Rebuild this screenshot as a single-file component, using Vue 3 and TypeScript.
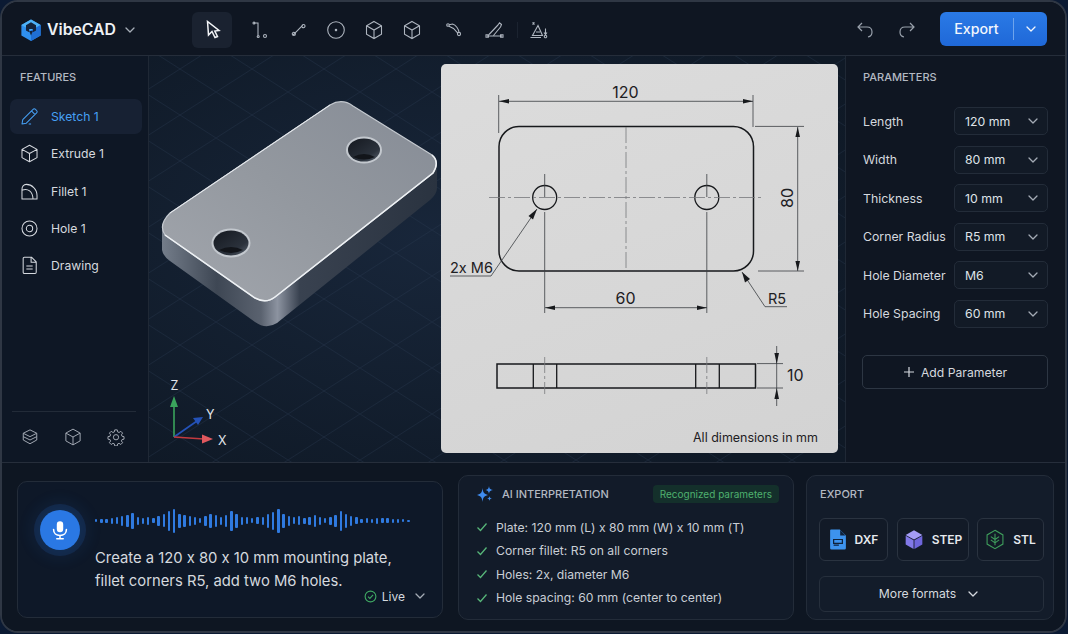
<script setup lang="ts">
// toolbar icons are 20x20, single path each
const tools = [
  { d: 'M5.5 1.5 L6.5 15 L10 11.5 L13 17.5 L15.5 16.5 L12.8 11 L17 10.5 Z', active: true },
  { d: 'M4 3 H8 V15.5 M5 3 a1 1 0 1 1 -2 0 a1 1 0 1 1 2 0 M9.2 16.5 a1 1 0 1 1 -2 0 a1 1 0 1 1 2 0 M16.5 16 a1.5 1.5 0 1 1 -3 0 a1.5 1.5 0 1 1 3 0' },
  { d: 'M5.2 14.8 L14.8 5.2 M5.9 15.5 a1.6 1.6 0 1 1 -0.1 -3.2 a1.6 1.6 0 1 1 0.1 3.2 M15.5 7.7 a1.6 1.6 0 1 1 -0.1 -3.2 a1.6 1.6 0 1 1 0.1 3.2' },
  { d: 'M18.3 10 a8.3 8.3 0 1 1 -16.6 0 a8.3 8.3 0 1 1 16.6 0 M10.7 10 a0.7 0.7 0 1 1 -1.4 0 a0.7 0.7 0 1 1 1.4 0' },
  { d: 'M10 1.5 L17.5 5.7 V14.3 L10 18.5 L2.5 14.3 V5.7 Z M2.5 5.7 L10 10 L17.5 5.7 M10 10 V18.5' },
  { d: 'M10 1.5 L17.5 5.7 V14.3 L10 18.5 L2.5 14.3 V5.7 Z M2.5 5.7 L10 10 L17.5 5.7 M10 10 V18.5' },
  { d: 'M5.3 4.8 L8.5 4 C12 5 14.5 9 15 12.4 M5 6.2 L9.5 8.5 L13.8 13.2 M5.3 5 a1.3 1.3 0 1 1 -2.6 0 a1.3 1.3 0 1 1 2.6 0 M16.6 14 a1.6 1.6 0 1 1 -3.2 0 a1.6 1.6 0 1 1 3.2 0' },
  { d: 'M3 16 H18 M5 14.5 L14 5 M9.5 15.5 L16.5 7 M14 5 L15.5 2.8 L17.5 4.5 L16.5 7 M2 14.8 h2.4 v2.4 h-2.4 z M16.6 14.8 h2.4 v2.4 h-2.4 z' },
  { d: 'M9 5.5 L3.5 15.5 H13.5 Z M7 12 H11 M3.5 2.5 l2 2 M5.5 2.5 l-2 2 M1.5 17.5 H12 M16.5 8.5 V14 M15 12.5 L16.5 14.5 L18 12.5 M17.7 16.5 a1.2 1.2 0 1 1 -2.4 0 a1.2 1.2 0 1 1 2.4 0' },
]

const features = [
  { name: 'Sketch 1', active: true, d: 'M2.5 21.5 L3.5 16 L16.5 3 a2 2 0 0 1 3 0 L21 4.5 a2 2 0 0 1 0 3 L8 20.5 Z M14.5 5 L19 9.5 M11 21.5 H14' },
  { name: 'Extrude 1', d: 'M12 1.5 L21.5 6.8 V17.2 L12 22.5 L2.5 17.2 V6.8 Z M2.5 6.8 L12 12 L21.5 6.8 M12 12 V22.5' },
  { name: 'Fillet 1', d: 'M2.5 21.5 H21.5 V17 C21.5 9 15 3 8 3 C4.5 3 2.5 6 2.5 9 Z M2.5 10.5 C10 7.5 16 12 16.5 21.5' },
  { name: 'Hole 1', d: 'M21.5 12 a9.5 9.5 0 1 1 -19 0 a9.5 9.5 0 1 1 19 0 M16 12 a4 4 0 1 1 -8 0 a4 4 0 1 1 8 0' },
  { name: 'Drawing', d: 'M5.5 1.5 H14.5 L20.5 7.5 V20.5 a1.5 1.5 0 0 1 -1.5 1.5 H5.5 A1.5 1.5 0 0 1 4 20.5 V3 A1.5 1.5 0 0 1 5.5 1.5 Z M14 2 V8 H20.5 M8 12.5 H16 M8 16.5 H16' },
]

const sideIcons = [
  'M12 2.5 L21 7 L12 11.5 L3 7 Z M3 11.5 L12 16 L21 11.5 M3 16 L12 21 L21 16 M3 7 V16 M21 7 V16',
  'M12 1.5 L21.5 6.8 V17.2 L12 22.5 L2.5 17.2 V6.8 Z M2.5 6.8 L12 12 L21.5 6.8 M12 12 V22.5',
  'M10.3 2.5 h3.4 l.5 2.7 1.9.8 2.3-1.6 2.4 2.4-1.6 2.3.8 1.9 2.7.5 v3.4 l-2.7.5 -.8 1.9 1.6 2.3 -2.4 2.4 -2.3-1.6 -1.9.8 -.5 2.7 h-3.4 l-.5-2.7 -1.9-.8 -2.3 1.6 -2.4-2.4 1.6-2.3 -.8-1.9 -2.7-.5 v-3.4 l2.7-.5 .8-1.9 -1.6-2.3 2.4-2.4 2.3 1.6 1.9-.8 Z M15.5 12.3 a3.5 3.5 0 1 1 -7 0 a3.5 3.5 0 1 1 7 0',
]

const params = [
  { label: 'Length', value: '120 mm' },
  { label: 'Width', value: '80 mm' },
  { label: 'Thickness', value: '10 mm' },
  { label: 'Corner Radius', value: 'R5 mm' },
  { label: 'Hole Diameter', value: 'M6' },
  { label: 'Hole Spacing', value: '60 mm' },
]

const recognized = [
  'Plate: 120 mm (L) x 80 mm (W) x 10 mm (T)',
  'Corner fillet: R5 on all corners',
  'Holes: 2x, diameter M6',
  'Hole spacing: 60 mm (center to center)',
]

// waveform bar heights, left to right
const wave = [3, 4, 4, 6, 7, 10, 12, 16, 8, 6, 8, 5, 10, 13, 20, 24, 14, 12, 10, 8, 5, 10, 14, 12, 8, 12, 20, 14, 8, 7, 5, 7, 8, 14, 18, 24, 14, 10, 7, 9, 6, 8, 12, 8, 5, 8, 12, 20, 14, 10, 7, 4, 5, 4, 6, 5, 5, 4, 4, 3, 2]
</script>

<template>
  <div class="frame">
    <header class="topbar">
      <div class="brand">
        <svg viewBox="0 0 24 24" width="22" height="24">
          <path d="M12 0.5 L22.5 6.5 V18 L12 24 L1.5 18 V6.5 Z" fill="#2f8fee" />
          <path d="M12 0.5 L22.5 6.5 L12 12.5 L1.5 6.5 Z" fill="#4db1f7" />
          <path d="M12 12.5 V24 L22.5 18 V6.5 Z" fill="#1f6fd6" />
          <path d="M12 3.5 L17.5 6.7 V12.5 L14 14.5 V11 H10 V14.5 L6.5 12.5 V6.7 Z" fill="#14233c" />
          <path d="M10 13 H14 L12 18 Z" fill="#14233c" />
        </svg>
        <span class="brand-name">VibeCAD</span>
        <svg class="chev" viewBox="0 0 12 12" width="12" height="12"><path d="M2 4 L6 8 L10 4" /></svg>
      </div>
      <nav class="tools">
        <button v-for="(t, i) in tools" :key="i" class="tool" :class="{ on: t.active }">
          <svg class="ln" viewBox="0 0 20 20" width="20" height="20"><path :d="t.d" /></svg>
        </button>
      </nav>
      <div class="history">
        <svg class="ln" viewBox="0 0 20 20" width="20" height="20"><path d="M7 3 L3 7 L7 11 M3 7 H12 C15 7 17 9 17 12 C17 14.5 15.5 16.5 13 17" /></svg>
        <svg class="ln" viewBox="0 0 20 20" width="20" height="20"><path d="M13 3 L17 7 L13 11 M17 7 H8 C5 7 3 9 3 12 C3 14.5 4.5 16.5 7 17" /></svg>
      </div>
      <button class="export-btn">
        <span class="export-text">Export</span>
        <span class="export-caret">
          <svg class="chev" viewBox="0 0 12 12" width="12" height="12"><path d="M2 4 L6 8 L10 4" /></svg>
        </span>
      </button>
    </header>

    <div class="workspace">
      <aside class="features">
        <h3 class="label">FEATURES</h3>
        <ul class="feature-list">
          <li v-for="f in features" :key="f.name" class="feature" :class="{ on: f.active }">
            <svg class="ln" viewBox="0 0 24 24" width="19" height="19"><path :d="f.d" /></svg>
            <span>{{ f.name }}</span>
          </li>
        </ul>
        <div class="side-foot">
          <svg v-for="(d, i) in sideIcons" :key="i" class="ln" viewBox="0 0 24 24" width="18" height="18"><path :d="d" /></svg>
        </div>
      </aside>

      <main class="viewport">
        <svg class="scene" viewBox="149 56 696 406" width="696" height="406">
          <defs>
            <pattern id="iso" width="72" height="46" patternUnits="userSpaceOnUse">
              <path d="M0 0 L72 46 M72 0 L0 46" stroke="#2a3b52" stroke-width="0.6" fill="none" />
            </pattern>
            <radialGradient id="glow" cx="0.4" cy="0.45" r="0.7">
              <stop offset="0" stop-color="#18263a" />
              <stop offset="1" stop-color="#0f1926" />
            </radialGradient>
            <linearGradient id="face" x1="0" y1="1" x2="1" y2="0">
              <stop offset="0" stop-color="#a2a6ad" />
              <stop offset="0.5" stop-color="#93989f" />
              <stop offset="1" stop-color="#868c96" />
            </linearGradient>
            <linearGradient id="side" x1="0" y1="0" x2="1" y2="0">
              <stop offset="0" stop-color="#747d8a" />
              <stop offset="0.2" stop-color="#3e4754" />
              <stop offset="0.36" stop-color="#5a626f" />
              <stop offset="0.42" stop-color="#8c93a0" />
              <stop offset="0.5" stop-color="#394250" />
              <stop offset="1" stop-color="#2a3340" />
            </linearGradient>
            <linearGradient id="bore" x1="0" y1="0" x2="1" y2="1">
              <stop offset="0" stop-color="#14181f" />
              <stop offset="0.7" stop-color="#2b323c" />
              <stop offset="1" stop-color="#5b6470" />
            </linearGradient>
          </defs>
          <rect x="149" y="56" width="696" height="406" fill="url(#glow)" />
          <rect x="149" y="56" width="696" height="406" fill="url(#iso)" opacity="0.6" />

          <!-- plate -->
          <path d="M162 225 V250 Q163 256 170 261 L255 322 Q266 330 277 323 L430 200 Q437 194 437 188 V165 Z" fill="url(#side)" />
          <path d="M170 213 L330 105 Q342 98 353 106 L432 155 Q440 162 433 173 L275 297 Q266 304 255 298 L165 235 Q158 225 170 213 Z" fill="url(#face)" stroke="#c4c9cf" stroke-width="1.2" />
          <path d="M165 235 L255 298 Q266 304 275 297 L433 173 Q440 162 432 155" fill="none" stroke="#eef1f4" stroke-width="1.5" />
          <path d="M170 213 L330 105" fill="none" stroke="#e5e8ec" stroke-width="1" />

          <g>
            <ellipse cx="364" cy="150" rx="18" ry="13.5" fill="#c3c8ce" />
            <ellipse cx="364" cy="150" rx="16" ry="11.5" fill="url(#bore)" />
            <path d="M353 157 Q364 151 375 157 Q364 162 353 157 Z" fill="#12151a" />
          </g>
          <g>
            <ellipse cx="231" cy="243" rx="19.5" ry="14.5" fill="#c3c8ce" />
            <ellipse cx="231" cy="243" rx="17.5" ry="12.5" fill="url(#bore)" />
            <path d="M219 250 Q231 244 243 250 Q231 256 219 250 Z" fill="#12151a" />
          </g>

          <!-- axis gizmo -->
          <path d="M174 437 V404" stroke="#3aa45c" stroke-width="1.6" />
          <path d="M174 396 L178 407 H170 Z" fill="#3aa45c" />
          <path d="M174 437 L197 421" stroke="#2452b8" stroke-width="1.6" />
          <path d="M203 417 L198 425 L193 418 Z" fill="#2452b8" />
          <path d="M174 437 L204 439" stroke="#c33a3f" stroke-width="1.6" />
          <path d="M213 439 L202 443.5 V434.5 Z" fill="#e0585e" />
          <text x="170.5" y="390" class="axis">Z</text>
          <text x="206" y="419" class="axis">Y</text>
          <text x="218" y="445" class="axis">X</text>
        </svg>

        <section class="sheet">
          <svg viewBox="441 64 397 389" width="397" height="389">
            <!-- top view -->
            <rect x="499" y="126.5" width="254.5" height="144.5" rx="20" class="thick" />
            <circle cx="544.7" cy="197.5" r="12" class="med" />
            <circle cx="706.8" cy="197.5" r="12" class="med" />
            <path d="M626 127 V271" class="center" />
            <path d="M489 197.5 H762" class="center" />
            <path d="M544.7 174 V197 M706.8 174 V197" class="thin" />
            <path d="M544.7 212 V313 M706.8 212 V313" class="thin" />

            <!-- 120 -->
            <path d="M498.7 95 V133 M753 95 V127 M499 101.3 H753" class="thin" />
            <path d="M499 101.3 L509 99 V103.6 Z M753 101.3 L743 99 V103.6 Z" class="head" />
            <text x="625.5" y="97.5" class="dim" text-anchor="middle">120</text>

            <!-- 80 -->
            <path d="M755 126.4 H804 M758 271 H804 M797.7 127 V271" class="thin" />
            <path d="M797.7 127 L795.4 137 H800 Z M797.7 271 L795.4 261 H800 Z" class="head" />
            <text transform="translate(793 198) rotate(-90)" class="dim" text-anchor="middle">80</text>

            <!-- 2x M6 leader -->
            <path d="M450 276 H491 L537 209" class="thin" />
            <path d="M537 209 L528.5 216 L533 219.5 Z" class="head" />
            <text x="450" y="273" class="dim small">2x M6</text>

            <!-- R5 leader -->
            <path d="M742 272 L765 306.7 H787" class="thin" />
            <path d="M742 272 L745 282.5 L750 279 Z" class="head" />
            <text x="768" y="303.5" class="dim small">R5</text>

            <!-- 60 -->
            <path d="M545 307.7 H707" class="thin" />
            <path d="M545 307.7 L555 305.4 V310 Z M707 307.7 L697 305.4 V310 Z" class="head" />
            <text x="625.5" y="303.5" class="dim" text-anchor="middle">60</text>

            <!-- side view -->
            <rect x="497" y="364" width="258.5" height="24" class="thick" />
            <path d="M533.3 364 V388 M556.7 364 V388 M695.7 364 V388 M719.3 364 V388" class="med" />
            <path d="M544.7 357 V394 M706.8 357 V394" class="center" />
            <path d="M757 363.6 H783 M757 388 H783 M776.7 346 V406" class="thin" />
            <path d="M776.7 364 L774.4 353 H779 Z M776.7 388 L774.4 399 H779 Z" class="head" />
            <text x="787" y="381" class="dim">10</text>

            <text x="693" y="441.5" class="note">All dimensions in mm</text>
          </svg>
        </section>
      </main>

      <aside class="params">
        <h3 class="label">PARAMETERS</h3>
        <div v-for="p in params" :key="p.label" class="param">
          <span>{{ p.label }}</span>
          <div class="select">
            <span>{{ p.value }}</span>
            <svg class="chev" viewBox="0 0 12 12" width="12" height="12"><path d="M2 4 L6 8 L10 4" /></svg>
          </div>
        </div>
        <button class="add-param">
          <svg class="ln" viewBox="0 0 12 12" width="12" height="12"><path d="M6 1 V11 M1 6 H11" /></svg>
          Add Parameter
        </button>
      </aside>
    </div>

    <footer class="dock">
      <section class="voice">
        <div class="mic">
          <svg viewBox="0 0 24 24" width="22" height="22">
            <rect x="8.5" y="2.5" width="7" height="12" rx="3.5" fill="#fff" />
            <path d="M5 11.5 C5 15.5 8 18 12 18 C16 18 19 15.5 19 11.5 M12 18 V21.5 M8.5 21.5 H15.5" fill="none" stroke="#fff" stroke-width="1.7" stroke-linecap="round" />
          </svg>
        </div>
        <div class="voice-body">
          <div class="wave">
            <i v-for="(h, i) in wave" :key="i" :style="{ height: h + 'px' }" />
          </div>
          <p class="prompt">Create a 120 x 80 x 10 mm mounting plate,<br />fillet corners R5, add two M6 holes.</p>
          <div class="live">
            <svg class="ln tick" viewBox="0 0 14 14" width="13" height="13"><circle cx="7" cy="7" r="5.8" /><path d="M4.3 7.2 L6.3 9.1 L9.8 5.2" /></svg>
            <span>Live</span>
            <svg class="chev" viewBox="0 0 12 12" width="12" height="12"><path d="M2 4 L6 8 L10 4" /></svg>
          </div>
        </div>
      </section>

      <section class="interp">
        <div class="interp-head">
          <svg viewBox="0 0 18 18" width="18" height="18">
            <path d="M6.5 3 C7 7.500 8 9 12 10 C8 11 7 12.500 6.500 17 C6 12.500 5 11 1 10 C5 9 6 7.500 6.500 3 Z" fill="#3f8cf0" />
            <path d="M13 1 C13.300 3.500 14 4.300 17 5 C14 5.700 13.300 6.500 13 9 C12.700 6.500 12 5.700 9.500 5 C12 4.300 12.700 3.500 13 1 Z" fill="#3f8cf0" />
            <path d="M13.500 11 C13.700 12.500 14.200 13.200 16 13.500 C14.200 13.800 13.700 14.500 13.500 16 C13.300 14.500 12.800 13.800 11 13.500 C12.800 13.200 13.300 12.500 13.500 11 Z" fill="#3f8cf0" />
          </svg>
          <h3 class="label">AI INTERPRETATION</h3>
          <span class="badge">Recognized parameters</span>
        </div>
        <ul class="checks">
          <li v-for="r in recognized" :key="r">
            <svg class="ln" viewBox="0 0 12 12" width="12" height="12"><path d="M1.5 6.5 L4.5 9.5 L10.5 2.5" /></svg>
            <span>{{ r }}</span>
          </li>
        </ul>
      </section>

      <section class="export-card">
        <h3 class="label">EXPORT</h3>
        <div class="formats">
          <button class="fmt fmt-dxf">
            <svg viewBox="0 0 20 24" width="18" height="21">
              <path d="M2 0.5 H12 L19 7.5 V22 a1.5 1.5 0 0 1 -1.5 1.5 H2.5 A1.5 1.5 0 0 1 1 22 V1.5 A1 1 0 0 1 2 0.5 Z" fill="#3d93ee" />
              <path d="M12.5 1 V7.5 H18.5 Z" fill="#10223a" />
              <path d="M5 12 H15 V16.5 H5 Z M5 18.5 H11" fill="none" stroke="#10223a" stroke-width="1.4" />
            </svg>
            DXF
          </button>
          <button class="fmt fmt-step">
            <svg viewBox="0 0 24 24" width="20" height="21">
              <path d="M12 1 L22 6.5 L12 12 L2 6.5 Z" fill="#a49cf6" />
              <path d="M2 7.5 L11.5 13 V23.5 L2 18 Z" fill="#8279e8" />
              <path d="M22 7.5 L12.5 13 V23.5 L22 18 Z" fill="#6f66dc" />
            </svg>
            STEP
          </button>
          <button class="fmt fmt-stl">
            <svg viewBox="0 0 24 24" width="20" height="21" fill="none" stroke="#3f9d5c" stroke-width="1.3">
              <path d="M12 1 L21.5 6.5 V17.5 L12 23 L2.5 17.5 V6.5 Z" />
              <path d="M12 5 V19 M12 12 L7 8.5 M12 12 L17 8.5 M12 16 L7 12.5 M12 16 L17 12.5" />
            </svg>
            STL
          </button>
        </div>
        <button class="more">
          More formats
          <svg class="chev" viewBox="0 0 12 12" width="12" height="12"><path d="M2 4 L6 8 L10 4" /></svg>
        </button>
      </section>
    </footer>
  </div>
</template>

<style scoped>
.frame {
  box-sizing: border-box;
  width: 1067px;
  height: 633px;
  display: flex;
  flex-direction: column;
  overflow: hidden;
  border: 2px solid #2f3744;
  border-radius: 18px;
  background: #0e1520;
  font-family: Inter, "Liberation Sans", sans-serif;
  font-feature-settings: "calt" 0;
  color: #dfe3e8;
  font-size: 12.2px;
}
.ln path, .ln circle, .chev path {
  fill: none;
  stroke: currentColor;
}
button {
  font-family: inherit;
  font-feature-settings: inherit;
  cursor: pointer;
}
h3, ul, p {
  margin: 0;
  padding: 0;
  list-style: none;
}
.label {
  font-size: 11px;
  font-weight: 500;
  color: #b3b9c2;
}
.chev path {
  stroke-width: 1.3;
  stroke-linecap: round;
  stroke-linejoin: round;
}

/* top bar */
.topbar {
  height: 53px;
  flex: none;
  display: flex;
  align-items: center;
  padding: 0 18px;
  border-bottom: 1px solid #252d3a;
  background: #0f1622;
}
.brand, .tools, .history {
  margin-top: 2px;
}
.brand {
  width: 172px;
  display: flex;
  align-items: center;
}
.brand-name {
  margin-left: 5px;
  font-size: 15.8px;
  font-weight: 600;
  color: #eef1f5;
}
.brand .chev {
  margin-left: 8px;
  color: #a6adb7;
}
.tools {
  display: flex;
  align-items: center;
}
.tool {
  position: relative;
  width: 38px;
  height: 36px;
  display: flex;
  align-items: center;
  justify-content: center;
  padding: 0;
  border: 0;
  border-radius: 6px;
  background: transparent;
  color: #aeb5bf;
}
.tool .ln path { stroke-width: 1.1; }
.tool.on {
  width: 40px;
  margin-right: 9px;
  background: #1a2230;
  color: #f2f4f7;
}
.tool.on .ln path { stroke-width: 1.5; }
.tool:nth-child(7) { margin-left: 4px; }
.tool:nth-child(8) { margin-left: 2px; }
.tool:nth-child(9) { margin-left: 7px; }
.tool:nth-child(9)::before {
  content: "";
  position: absolute;
  left: -3px;
  top: 10px;
  width: 1px;
  height: 16px;
  background: #1b2330;
}
.history {
  margin-left: auto;
  margin-right: 23px;
  display: flex;
  gap: 22px;
  color: #99a1ac;
}
.history .ln path { stroke-width: 1.2; }
.export-btn {
  width: 107px;
  height: 34px;
  display: flex;
  align-items: center;
  padding: 0;
  border: 0;
  border-radius: 6px;
  background: linear-gradient(180deg, #2a7ae6, #1f68d8);
  color: #f2f6fc;
  font-size: 14.2px;
  font-weight: 500;
}
.export-text {
  width: 73px;
  text-align: center;
}
.export-caret {
  height: 22px;
  flex: 1;
  display: flex;
  align-items: center;
  justify-content: center;
  border-left: 1px solid #6ea4ec;
}

/* main row */
.workspace {
  height: 407px;
  box-sizing: border-box;
  flex: none;
  display: flex;
  border-bottom: 1px solid #262e3b;
}
.features {
  width: 147px;
  box-sizing: border-box;
  flex: none;
  display: flex;
  flex-direction: column;
  background: #0e1725;
  border-right: 1px solid #1f2835;
}
.features > .label {
  margin: 14px 0 0 18px;
}
.feature-list {
  margin-top: 15px;
  padding-left: 8px;
}
.feature {
  width: 132px;
  height: 35px;
  margin-bottom: 2.3px;
  display: flex;
  align-items: center;
  gap: 12px;
  padding-left: 10px;
  box-sizing: border-box;
  border-radius: 7px;
  color: #d5d9df;
}
.feature .ln path { stroke-width: 1.3; stroke-linejoin: round; }
.feature.on {
  background: #172133;
  color: #46a0f5;
}
.side-foot {
  margin: auto 12px 0 10px;
  height: 50px;
  display: flex;
  align-items: center;
  gap: 25px;
  padding-left: 9px;
  border-top: 1px solid #222b38;
  color: #a3aab4;
}
.side-foot .ln path { stroke-width: 1.3; stroke-linejoin: round; }
.viewport {
  position: relative;
  flex: 1;
  min-width: 0;
  display: flex;
  justify-content: flex-end;
  padding: 8px 7px 0 0;
}
.scene {
  position: absolute;
  left: 0;
  top: 0;
}
.scene .axis {
  font-size: 12.5px;
  fill: #e2e5ea;
}
.sheet {
  position: relative;
  width: 397px;
  height: 389px;
  border-radius: 5px;
  overflow: hidden;
  background: linear-gradient(160deg, #dcdcdc, #d3d3d3);
}
.sheet svg { display: block; }
.sheet .thick, .sheet .med, .sheet .thin, .sheet .center {
  fill: none;
  stroke: #17191c;
}
.sheet .thick { stroke-width: 1.5; }
.sheet .med { stroke-width: 1.3; }
.sheet .thin { stroke: #3a3d41; stroke-width: 0.8; }
.sheet .center { stroke: #77797c; stroke-width: 0.8; stroke-dasharray: 16 3 3 3; }
.sheet .head { fill: #17191c; stroke: none; }
.sheet .dim {
  fill: #1e2023;
  font-size: 16px;
}
.sheet .small { font-size: 14.5px; }
.sheet .note {
  fill: #1e2023;
  font-size: 12.5px;
}

/* parameters */
.params {
  width: 220px;
  flex: none;
  box-sizing: border-box;
  padding: 14px 17px 0 17px;
  background: #0f1622;
  border-left: 1px solid #1f2835;
}
.params > .label {
  margin-bottom: 23px;
}
.param {
  height: 28px;
  margin-bottom: 10.6px;
  display: flex;
  align-items: center;
  justify-content: space-between;
  color: #d5d9df;
  font-size: 12.3px;
}
.select {
  width: 94px;
  height: 28px;
  box-sizing: border-box;
  display: flex;
  align-items: center;
  justify-content: space-between;
  padding: 0 8px 0 10px;
  border: 1px solid #232c39;
  border-radius: 5px;
  background: #121a26;
  color: #dfe3e8;
}
.select .chev { color: #a4abb5; }
.add-param {
  width: 186px;
  height: 34px;
  margin-top: 27.4px;
  margin-left: -1px;
  display: flex;
  align-items: center;
  justify-content: center;
  gap: 6px;
  border: 1px solid #2d3643;
  border-radius: 5px;
  background: transparent;
  color: #d5d9df;
  font-size: 12.2px;
}
.add-param .ln path { stroke-width: 1.2; }

/* bottom dock */
.dock {
  flex: 1;
  display: flex;
  align-items: center;
  padding: 0 11px 0 15px;
  background: #0e1622;
}
.voice, .interp, .export-card {
  box-sizing: border-box;
  flex: none;
  border: 1px solid #232c39;
  border-radius: 10px;
}
.voice {
  width: 426px;
  height: 137px;
  margin-top: 4px;
  display: flex;
  padding: 0 16px 0 22px;
  background: #0e1828;
}
.mic {
  width: 40px;
  height: 40px;
  flex: none;
  margin-top: 28px;
  display: flex;
  align-items: center;
  justify-content: center;
  border-radius: 50%;
  background: #2a78e4;
  box-shadow: 0 0 0 6px rgba(42, 120, 228, 0.14), 0 0 16px 8px rgba(42, 120, 228, 0.1);
}
.voice-body {
  flex: 1;
  margin-left: 15px;
  min-width: 0;
  display: flex;
  flex-direction: column;
}
.wave {
  height: 26px;
  margin-top: 26px;
  width: 315px;
  display: flex;
  align-items: center;
  justify-content: space-between;
}
.wave i {
  width: 2.4px;
  border-radius: 1px;
  background: #2f7ae0;
}
.prompt {
  margin-top: 13px;
  font-size: 14.8px;
  line-height: 23px;
  color: #d5d9df;
}
.live {
  align-self: flex-end;
  margin-top: -4px;
  display: flex;
  align-items: center;
  gap: 5px;
  color: #d5d9df;
  font-size: 12px;
}
.tick { color: #3fa863; }
.tick path, .tick circle { stroke-width: 1.2; }
.live .chev { margin-left: 4px; color: #a4abb5; }

.interp {
  width: 336px;
  height: 145px;
  margin-left: 15px;
  padding: 8px 14px 0 17px;
  background: #121b29;
}
.interp-head {
  height: 20px;
  display: flex;
  align-items: center;
  gap: 8px;
}
.badge {
  margin-left: auto;
  padding: 3px 7px;
  border-radius: 4px;
  background: #14302b;
  color: #4fb06f;
  font-size: 10px;
}
.checks {
  margin-top: 12px;
  margin-left: -1px;
}
.checks li {
  height: 23.5px;
  display: flex;
  align-items: center;
  gap: 8px;
  color: #c9ced5;
}
.checks svg {
  margin-left: 1px;
  color: #57b679;
}
.checks .ln path { stroke-width: 1.3; }

.export-card {
  width: 248px;
  height: 145px;
  margin-left: 12px;
  padding: 11px 9px 0 12px;
  background: #131c2a;
}
.export-card > .label {
  margin-left: 1px;
}
.formats {
  margin-top: 17px;
  display: flex;
  gap: 9px;
}
.fmt {
  height: 43px;
  display: flex;
  align-items: center;
  justify-content: center;
  gap: 8px;
  padding: 0;
  border: 1px solid #2a3340;
  border-radius: 6px;
  background: #121a27;
  color: #e6e9ee;
  font-size: 12px;
  font-weight: 600;
}
.fmt-dxf { width: 69px; }
.fmt-step { width: 72px; margin-right: -1px; }
.fmt-stl { width: 67px; }
.more {
  width: 225px;
  height: 36px;
  margin-top: 15px;
  display: flex;
  align-items: center;
  justify-content: center;
  gap: 11px;
  padding: 0 5px 0 0;
  border: 1px solid #262f3c;
  border-radius: 6px;
  background: transparent;
  color: #d5d9df;
  font-size: 12.2px;
}
</style>

<style>
html, body {
  margin: 0;
  background: #0b1a33;
}
</style>
